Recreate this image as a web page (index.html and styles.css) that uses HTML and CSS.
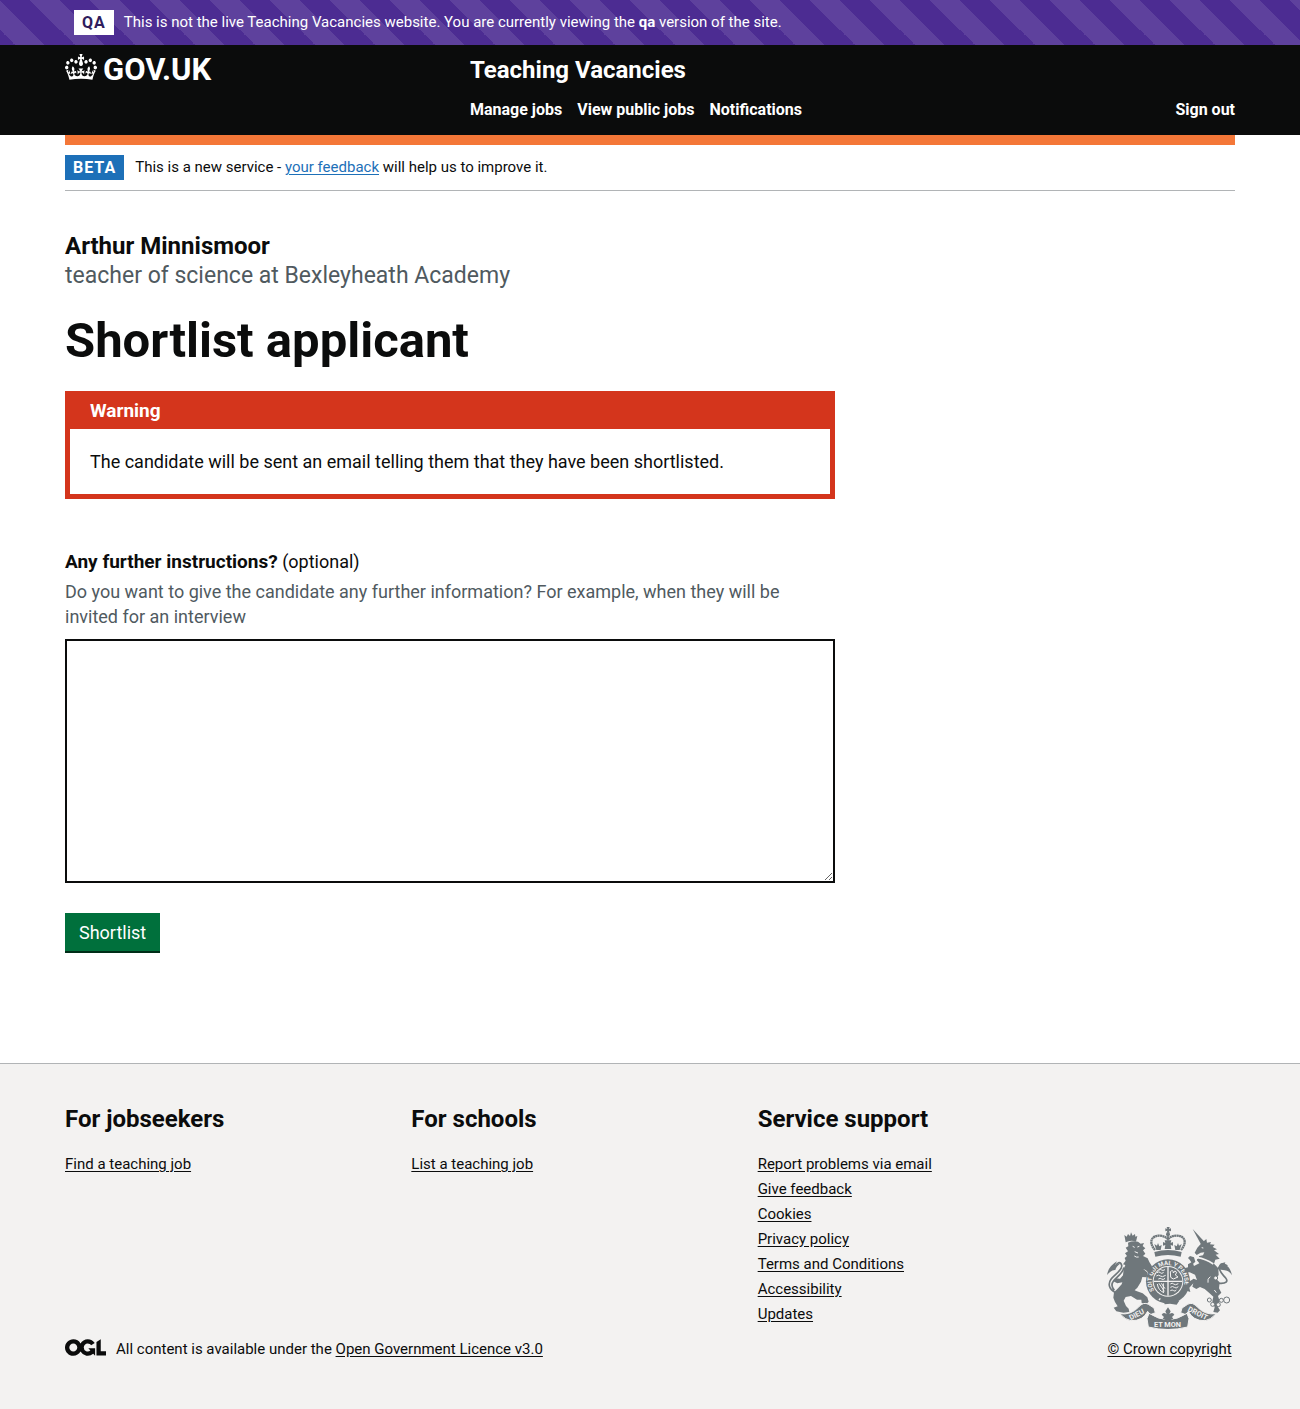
FILE: index.html
```html
<!DOCTYPE html>
<html lang="en">
<head>
<meta charset="utf-8">
<meta name="viewport" content="width=device-width, initial-scale=1">
<title>Shortlist applicant - Teaching Vacancies - GOV.UK</title>
<link rel="stylesheet" href="styles.css">
</head>
<body>
<div class="environment">
  <div class="container environment-inner">
    <strong class="tag tag-light">QA</strong>
    <span>This is not the live Teaching Vacancies website. You are currently viewing the <b>qa</b> version of the site.</span>
  </div>
</div>

<header class="header">
  <div class="container header-inner">
    <a class="logo" href="#">
      <svg class="logo-crown" viewBox="0 0 132 97" preserveAspectRatio="none" aria-hidden="true"><path fill="currentColor" d="M25 30.2c3.5 1.5 7.7-.2 9.1-3.7 1.5-3.6-.2-7.8-3.9-9.2-3.6-1.4-7.6.3-9.1 3.9-1.4 3.5.3 7.5 3.9 9zM9 39.5c3.6 1.5 7.8-.2 9.2-3.7 1.5-3.6-.2-7.8-3.9-9.1-3.6-1.5-7.6.2-9.1 3.8-1.4 3.5.3 7.5 3.8 9zM4.4 57.2c3.5 1.5 7.7-.2 9.1-3.8 1.5-3.6-.2-7.7-3.9-9.1-3.5-1.5-7.6.3-9.1 3.8-1.4 3.5.3 7.6 3.9 9.1zm38.3-21.4c3.5 1.5 7.7-.2 9.1-3.8 1.5-3.6-.2-7.7-3.9-9.1-3.6-1.5-7.6.3-9.1 3.8-1.3 3.6.4 7.7 3.9 9.1zm64.4-5.6c-3.6 1.5-7.8-.2-9.1-3.7-1.5-3.6.2-7.8 3.8-9.2 3.6-1.4 7.7.3 9.2 3.9 1.3 3.5-.4 7.5-3.9 9zm15.9 9.3c-3.6 1.5-7.7-.2-9.1-3.7-1.5-3.6.2-7.8 3.7-9.1 3.6-1.5 7.7.2 9.2 3.8 1.5 3.5-.3 7.5-3.8 9zm4.7 17.7c-3.6 1.5-7.8-.2-9.2-3.8-1.5-3.6.2-7.7 3.9-9.1 3.6-1.5 7.7.3 9.2 3.8 1.3 3.5-.4 7.6-3.9 9.1zM89.3 35.8c-3.6 1.5-7.8-.2-9.2-3.8-1.4-3.6.2-7.7 3.9-9.1 3.6-1.5 7.7.3 9.2 3.8 1.4 3.6-.3 7.7-3.9 9.1zM69.7 17.7l8.9 4.7V9.3l-8.9 2.8c-.2-.3-.5-.6-.9-.9L72.4 0H59.6l3.5 11.2c-.3.3-.6.5-.9.9l-8.8-2.8v13.1l8.8-4.7c.3.3.6.7.9.9l-5 15.4v.1c-.2.8-.4 1.6-.4 2.4 0 4.1 3.1 7.5 7 8.1h.2c.3 0 .7.1 1 .1.4 0 .7 0 1-.1h.2c4-.6 7.1-4.1 7.1-8.1 0-.8-.1-1.7-.4-2.4V34l-5.1-15.4c.4-.2.7-.6 1-.9zM66 92.8c16.9 0 32.8 1.1 47.1 3.2 4-16.9 8.9-26.7 14-33.5l-9.6-3.4c1 4.9 1.1 7.2 0 10.2-1.5-1.4-3-4.3-4.2-8.7L108.6 76c2.8-2 5-3.2 7.5-3.3-4.4 9.4-10 11.9-13.6 11.2-4.3-.8-6.3-4.6-5.6-7.9 1-4.7 5.7-5.9 8-.5 4.3-8.7-3-11.4-7.6-8.8 7.1-7.2 7.9-13.5 2.1-21.1-8 6.1-8.1 12.3-4.5 20.8-4.7-5.4-12.1-2.5-9.5 6.2 3.4-5.2 7.9-2 7.2 3.1-.6 4.3-6.4 7.8-13.5 7.2-10.3-.9-10.9-8-11.2-13.8 2.5-.5 7.1 1.8 11 7.3L80.2 60c-4.1 4.4-8 5.3-12.3 5.4 1.4-4.4 8-11.6 8-11.6H55.5s6.4 7.2 7.9 11.6c-4.2-.1-8-1-12.3-5.4l1.4 16.4c3.9-5.5 8.5-7.7 10.9-7.3-.3 5.8-.9 12.8-11.1 13.8-7.2.6-12.9-2.9-13.5-7.2-.7-5 3.8-8.3 7.1-3.1 2.7-8.7-4.6-11.6-9.4-6.2 3.7-8.5 3.6-14.7-4.6-20.8-5.8 7.6-5 13.9 2.2 21.1-4.7-2.6-11.9.1-7.7 8.8 2.3-5.5 7.1-4.2 8.1.5.7 3.3-1.3 7.1-5.7 7.9-3.5.7-9-1.8-13.5-11.2 2.5.1 4.7 1.3 7.5 3.3l-4.7-15.4c-1.2 4.4-2.7 7.2-4.3 8.7-1.1-3-.9-5.3 0-10.2l-9.5 3.4c5 6.9 9.9 16.7 14 33.5 14.8-2.1 30.8-3.2 47.7-3.2z"/></svg>
      <span>GOV.UK</span>
    </a>
    <div class="header-content">
      <a class="service-name" href="#">Teaching Vacancies</a>
      <nav class="nav" aria-label="Menu">
        <a href="#">Manage jobs</a>
        <a href="#">View public jobs</a>
        <a href="#">Notifications</a>
        <a class="nav-end" href="#">Sign out</a>
      </nav>
    </div>
  </div>
</header>

<div class="container">
  <div class="phase">
    <strong class="tag">BETA</strong>
    <span>This is a new service - <a href="#">your feedback</a> will help us to improve it.</span>
  </div>

  <main class="main">
    <h2 class="applicant">Arthur Minnismoor<span class="caption">teacher of science at Bexleyheath Academy</span></h2>
    <h1 class="title">Shortlist applicant</h1>

    <div class="warning" role="region" aria-labelledby="warning-title">
      <h2 class="warning-title" id="warning-title">Warning</h2>
      <p class="warning-text">The candidate will be sent an email telling them that they have been shortlisted.</p>
    </div>

    <form class="form">
      <label class="label" for="instructions"><b>Any further instructions?</b> (optional)</label>
      <p class="hint" id="instructions-hint">Do you want to give the candidate any further information? For example, when they will be invited for an interview</p>
      <textarea class="textarea" id="instructions" rows="9" aria-describedby="instructions-hint"></textarea>
      <button class="button" type="submit">Shortlist</button>
    </form>
  </main>
</div>

<footer class="footer">
  <div class="container footer-inner">
    <div class="footer-main">
      <div class="footer-columns">
        <section>
          <h2 class="footer-heading">For jobseekers</h2>
          <ul class="footer-list"><li><a href="#">Find a teaching job</a></li></ul>
        </section>
        <section>
          <h2 class="footer-heading">For schools</h2>
          <ul class="footer-list"><li><a href="#">List a teaching job</a></li></ul>
        </section>
        <section>
          <h2 class="footer-heading">Service support</h2>
          <ul class="footer-list">
            <li><a href="#">Report problems via email</a></li>
            <li><a href="#">Give feedback</a></li>
            <li><a href="#">Cookies</a></li>
            <li><a href="#">Privacy policy</a></li>
            <li><a href="#">Terms and Conditions</a></li>
            <li><a href="#">Accessibility</a></li>
            <li><a href="#">Updates</a></li>
          </ul>
        </section>
      </div>
      <div class="licence">
        <svg class="ogl" viewBox="0 0 483.2 195.7" aria-hidden="true"><path fill="currentColor" d="M421.5 142.8V.1l-50.7 32.3v161.1h112.4v-50.7zm-122.3-9.6A47.12 47.12 0 0 1 221 97.8c0-26 21.1-47.1 47.1-47.1 16.7 0 31.4 8.7 39.7 21.8l42.7-27.2A97.63 97.63 0 0 0 268.1 0c-36.5 0-68.3 20.1-85.1 49.7A98 98 0 0 0 97.8 0C43.9 0 0 43.9 0 97.8s43.9 97.8 97.8 97.8c36.5 0 68.3-20.1 85.1-49.7a97.76 97.76 0 0 0 149.6 25.4l19.4 22.2h3v-87.8h-80l24.3 27.5zM97.8 145c-26 0-47.1-21.1-47.1-47.1s21.1-47.1 47.1-47.1 47.1 21.1 47.1 47.1S123.8 145 97.8 145"/></svg>
        <span>All content is available under the <a href="#">Open Government Licence v3.0</a></span>
      </div>
    </div>

    <a class="copyright" href="#">
      <svg class="arms" viewBox="36 21 375 306" aria-hidden="true">
        <defs>
          <path id="garter" d="M178 211A49 49 0 1 1 260 211"/>
        </defs>
        <!-- royal crown -->
        <g class="ink">
          <path d="M215 21h9l-2 6 6-2v9l-6-2 2 6h-9l2-6-6 2v-9l6 2z"/>
          <circle cx="219" cy="43" r="6"/>
          <path d="M178 96Q219 84 260 96L257 110Q219 100 181 110z"/>
          <path d="M184 90l-6-18 8 5 3-8 4 10 7-4-3 15zM254 90l6-18-8 5-3-8-4 10-7-4 3 15zM209 87l2-12-7 2v-11l7 3-2-8h20l-2 8 7-3v11l-7-2 2 12z"/>
        </g>
        <g class="stroke" stroke-width="7" stroke-dasharray="6 1">
          <path d="M180 90C158 64 172 46 194 47 208 48 214 52 219 58 224 52 230 48 244 47 266 46 280 64 258 90"/>
          <path d="M219 48V66" stroke-width="5"/>
        </g>
        <!-- shield inside the garter -->
        <circle class="ink" cx="219" cy="184" r="66"/>
        <circle class="paper" cx="219" cy="184" r="46"/>
        <circle class="ink" cx="219" cy="184" r="43"/>
        <path class="line" stroke-width="4" d="M219 141v86M176 184h86"/>
        <g class="line" stroke-width="3">
          <path d="M186 158q6-5 10 0t10-1M184 168q7-5 12 0t16-2M190 177q6-4 10 0t10-2M192 150q5-3 8 0t10-1M226 155q9-8 9 4 4-10 10-2l-4 8 8 6-14 6-8-5zM187 192q3 20 20 26M192 190l16 24M199 190l11 16M205 190v26M226 192q6-5 10 0t14-1M226 202q7-5 12 0t12-2M226 212q6-4 10 0t8-2"/>
        </g>
        <text class="motto" font-size="18"><textPath href="#garter">SOIT QUI MAL Y PENSE</textPath></text>
        <path class="line" stroke-width="4" d="M192 240l4-5M208 244h5M224 246h5"/>
        <path class="ink" d="M205 240l28-6 20 8-8 12-20-3-16 2z"/>
        <!-- lion -->
        <g class="ink">
          <path d="M88 45l7 5 4-8 6 6 3-11 5 10 7-5 1 8 6-2-4 17Q107 59 92 67z"/>
          <path d="M99 68Q112 62 129 65L137 71 147 69 143 78 151 85 144 91 151 101 144 108 158 115 163 126 170 137 174 151 164 162 153 151 144 146 158 158 155 172 142 171 138 185 127 203 119 211 126 214 143 220 157 232 161 245 154 253 140 249 139 239 126 239 108 228 92 231 86 242 93 258 101 266 103 276 85 278 64 274 56 263 68 259 60 246 55 233 57 217 70 204 80 193 82 187 67 190 55 184 61 175 75 176 84 166 86 148 91 135 84 133 92 122 89 114 96 108 90 100 99 94 92 83 100 79z"/>
        </g>
        <path class="stroke" stroke-width="5" d="M62 218C42 208 38 192 48 178S84 150 80 136 66 128 60 140M58 211C50 202 48 192 56 182S88 156 86 142"/>
        <path class="ink" d="M36 165Q40 139 66 124L60 135 79 128Q62 140 61 150 49 149 36 165z"/>
        <path class="line" stroke-width="3" d="M113 79l6 3M127 81l6-2M119 95l10 4M118 108q6 5 13 3"/>
        <!-- unicorn -->
        <g class="ink">
          <path d="M293 27L331 68 319 75z"/>
          <path d="M320 69L334 57 336 68 348 66 345 73 359 74 353 81 366 88 357 91 372 102 362 104 374 116 361 119 357 131 370 145 371 165 363 176 374 187 372 205 379 218 369 228 374 244 367 258 375 271 368 278 355 276 359 262 352 244 355 230 342 218 329 207 315 201 304 207 292 200 295 190 283 203 286 216 277 213 272 200 284 184 296 176 306 180 300 164 284 157 271 158 268 145 279 142 279 133 292 125 297 138 313 130 306 121 313 108 324 106 328 97 317 98 305 105 299 98 307 83z"/>
          <path d="M284 119l-5-5 6-6 12 4 4 13-8 8z"/>
        </g>
        <path class="line" stroke-width="5" d="M308 113Q330 116 355 132"/>
        <path class="stroke" stroke-width="4" stroke-dasharray="5 4" d="M306 119Q328 124 352 140"/>
        <path class="line" stroke-width="3" d="M320 83l5 1M346 170q-10 6-7 18M364 218l-6-8"/>
        <path class="stroke" stroke-width="5" d="M372 190C394 192 400 184 392 174S370 154 374 140 387 132 397 138"/>
        <path class="ink" d="M368 148Q371 130 391 127L388 134Q405 137 411 166 401 151 389 151z"/>
        <g class="ring">
          <circle cx="362" cy="174" r="6"/><circle cx="343" cy="240" r="6"/><circle cx="353" cy="253" r="6"/><circle cx="370" cy="254" r="6"/><circle cx="379" cy="241" r="6"/><circle cx="395" cy="240" r="9"/>
        </g>
        <!-- motto ribbon -->
        <g class="ribbon">
          <path d="M74 281Q108 286 130 262 146 244 160 253L177 264 181 278 166 284 158 274Q144 303 108 302 92 300 74 281z"/>
          <path d="M364 281Q330 286 308 262 292 244 278 253L261 264 257 278 272 284 280 274Q294 303 330 302 346 300 364 281z"/>
          <path d="M156 296L162 280Q219 318 276 280L282 296 278 321Q219 336 160 321z"/>
        </g>
        <path class="ink" d="M219 262l8 12-4 9q10-8 15 1l-7 7 4 5q-16 10-32 0l4-5-7-7q5-9 15-1l-4-9z"/>
        <g class="motto" font-size="22">
          <text transform="translate(107 301) rotate(-27)">DIEU</text>
          <text transform="translate(177 322)">ET MON</text>
          <text transform="translate(277 272) rotate(27)">DROIT</text>
        </g>
      </svg>
      <span>© Crown copyright</span>
    </a>
  </div>
</footer>
</body>
</html>
```
FILE: styles.css
```css
* { box-sizing: border-box; }

body {
  margin: 0;
  background: #fff;
  color: #0b0c0c;
  font-family: Roboto, Arial, sans-serif;
  font-size: 18px;
  line-height: 25px;
}

h1, h2, p, ul { margin: 0; padding: 0; }
b, strong { font-weight: 700; }

.container {
  max-width: 1170px;
  margin: 0 auto;
}

@media (max-width: 1230px) {
  .container { margin: 0 30px; }
}

.tag {
  display: inline-block;
  padding: 0 8px;
  background: #1d70b8;
  color: #fff;
  font-size: 16px;
  letter-spacing: 1px;
}

.tag-light {
  background: #fff;
  color: #2f1c5c;
}

/* environment banner */
.environment {
  padding: 10px 0;
  background: #4c2c92 linear-gradient(45deg, transparent 25%, #5e419d 25%, #5e419d 50%, transparent 50%, transparent 75%, #5e419d 75%) 0 0 / 60px 60px;
  color: #fff;
  font-size: 15px;
}

.environment-inner {
  display: flex;
  gap: 10px;
  padding-left: 9px;
}

/* header */
.header {
  background: #0b0c0c;
  color: #fff;
}

.header a {
  color: #fff;
  text-decoration: none;
}

.header-inner {
  display: flex;
  padding: 10px 0;
}

.logo {
  flex: 0 0 405px;
  display: flex;
  align-items: flex-end;
  gap: 6px;
  height: 25px;
  font-size: 31px;
  font-weight: 700;
  line-height: 20px;
}

.logo-crown {
  width: 32px;
  height: 26px;
}

.header-content {
  flex: 1;
  display: flex;
  flex-direction: column;
  gap: 12px;
}

.service-name {
  font-size: 24px;
  font-weight: 700;
  line-height: 30px;
}

.nav {
  display: flex;
  flex-wrap: wrap;
  gap: 15px;
  padding-bottom: 3px;
  font-size: 16px;
  font-weight: 700;
}

.nav-end { margin-left: auto; }

/* phase banner */
.phase {
  display: flex;
  gap: 11px;
  padding: 10px 0;
  border-top: 10px solid #f47738;
  border-bottom: 1px solid #b1b4b6;
  font-size: 15px;
}

.phase a { color: #1d70b8; }

a { text-underline-offset: 2px; }

/* page content */
.main {
  max-width: 770px;
  padding: 40px 0 110px;
}

.applicant {
  margin-bottom: 25px;
  font-size: 24px;
  line-height: 30px;
}

.caption {
  display: block;
  color: #505a5f;
  font-size: 23px;
  font-weight: 400;
}

.title {
  margin-bottom: 25px;
  font-size: 49px;
  line-height: 50px;
}

.warning {
  margin-bottom: 50px;
  border: 5px solid #d4351c;
}

.warning-title {
  padding: 2px 20px 6px;
  background: #d4351c;
  color: #fff;
  font-size: 19px;
  line-height: 25px;
}

.warning-text { padding: 20px; }

.form {
  display: flex;
  flex-direction: column;
  align-items: flex-start;
}

.label {
  margin-bottom: 5px;
}

.label b { font-size: 19px; }

.hint {
  margin-bottom: 10px;
  color: #505a5f;
}

.textarea {
  width: 100%;
  min-height: 244px;
  margin: 0 0 30px;
  padding: 5px;
  border: 2px solid #0b0c0c;
  background: #fff;
  font: inherit;
  resize: vertical;
}

.button {
  margin-bottom: 2px;
  padding: 7px 14px 6px;
  border: 0;
  background: #00703c;
  box-shadow: 0 2px 0 #002d18;
  color: #fff;
  font: inherit;
}

/* footer */
.footer {
  padding: 40px 0 47px;
  border-top: 1px solid #b1b4b6;
  background: #f3f2f1;
  font-size: 15px;
}

.footer a { color: #0b0c0c; }

.footer-inner {
  display: flex;
  align-items: flex-end;
}

.footer-main { flex: 1; }

.footer-columns {
  display: grid;
  grid-template-columns: repeat(3, 1fr);
  margin-bottom: 10px;
}

.footer-heading {
  margin-bottom: 18px;
  font-size: 24px;
  line-height: 30px;
}

.footer-list { list-style: none; }

.licence {
  display: flex;
  align-items: flex-start;
  gap: 10px;
}

.ogl {
  width: 41px;
  height: 17px;
  margin-top: 2px;
}

.copyright {
  display: flex;
  flex: 0 0 131px;
  flex-direction: column;
  align-items: center;
  gap: 8px;
  white-space: nowrap;
}

.arms {
  width: 125px;
  height: 102px;
}

.ink, .ribbon { fill: #6f777b; }
.paper { fill: #f3f2f1; }
.ribbon { stroke: #f3f2f1; stroke-width: 3px; }
.stroke { fill: none; stroke: #6f777b; }
.line { fill: none; stroke: #f3f2f1; }
.ring { fill: #f3f2f1; stroke: #6f777b; stroke-width: 3px; }
.motto { fill: #f3f2f1; font-weight: 700; }
```
